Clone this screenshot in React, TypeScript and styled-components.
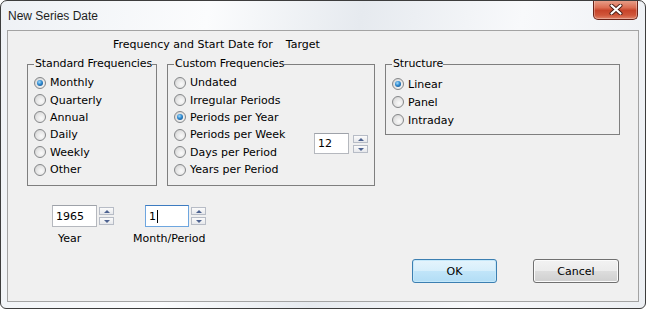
import React from 'react';
import styled, { createGlobalStyle } from 'styled-components';

const GlobalStyle = createGlobalStyle`
  html, body {
    margin: 0;
    padding: 0;
    background: #ffffff;
  }
  body {
    font-family: "DejaVu Sans", Verdana, sans-serif;
    font-size: 11px;
    color: #000000;
  }
`;

const Window = styled.div`
  box-sizing: border-box;
  width: 646px;
  height: 309px;
  border: 1px solid #3d3d3d;
  border-radius: 7px 7px 6px 6px;
  background: linear-gradient(100deg, #eef1f5 0%, #fbfcfd 30%, #e6eaef 52%, #f8f9fb 75%, #eceff3 100%);
  display: flex;
  flex-direction: column;
  overflow: hidden;
`;

const TitleBar = styled.div`
  height: 29px;
  display: flex;
  align-items: center;
  padding-left: 7px;
`;

const Title = styled.span`
  font-family: "Liberation Sans", Arial, sans-serif;
  font-size: 12px;
  color: #1e1e1e;
`;

const CloseButton = styled.div`
  align-self: flex-start;
  margin: -1px 7px 0 auto;
  width: 45px;
  height: 20px;
  box-sizing: border-box;
  border: 1px solid #6a2318;
  border-top: none;
  border-radius: 0 0 5px 5px;
  background: linear-gradient(#e9a48f 0%, #dc6e53 40%, #c7442a 55%, #d0563a 80%, #e0846a 100%);
  box-shadow: inset 0 0 0 1px rgba(255, 255, 255, 0.3);
  display: flex;
  align-items: center;
  justify-content: center;
`;

const Client = styled.div`
  box-sizing: border-box;
  margin: 0 6px 0 6px;
  height: 272px;
  border: 1px solid #a3a3a3;
  background: #f0f0f0;
  display: flex;
  flex-direction: column;
`;

const Heading = styled.div`
  display: flex;
  gap: 13px;
  margin: 7px 0 0 105px;
  line-height: 14px;
`;

const GroupRow = styled.div`
  display: flex;
  align-items: flex-start;
  gap: 10px;
  margin: 5px 0 0 19px;
`;

const GroupBox = styled.fieldset<{ $width: number; $height: number; $padTop: number }>`
  box-sizing: border-box;
  flex: none;
  width: ${(p) => p.$width}px;
  min-width: 0;
  min-inline-size: 0;
  height: ${(p) => p.$height}px;
  margin: 0;
  padding: ${(p) => p.$padTop}px 6px 0 6px;
  border: 1px solid #7f7f7f;
  display: flex;
  align-items: flex-start;
`;

const Legend = styled.legend`
  padding: 0 0 0 1px;
  line-height: 14px;
  letter-spacing: -0.12px;
  white-space: nowrap;
`;

const RadioList = styled.div`
  display: flex;
  flex-direction: column;
`;

const RadioRow = styled.label<{ $height: number }>`
  display: flex;
  align-items: center;
  gap: 4px;
  height: ${(p) => p.$height}px;
  white-space: nowrap;
`;

const RadioDot = styled.span<{ $checked?: boolean }>`
  box-sizing: border-box;
  width: 12px;
  height: 12px;
  border-radius: 50%;
  border: 1px solid #858789;
  background: radial-gradient(circle at 62% 62%, #fafafa 0%, #e4e4e4 55%, #c6c6c6 100%);
  display: flex;
  align-items: center;
  justify-content: center;
  flex-shrink: 0;

  &::after {
    content: '';
    display: ${(p) => (p.$checked ? 'block' : 'none')};
    width: 6px;
    height: 6px;
    border-radius: 50%;
    background: radial-gradient(circle at 40% 35%, #a6dcfb 0%, #2f8ad0 45%, #0c3e74 100%);
  }
`;

const Spinner = styled.div<{ $gap: number }>`
  display: flex;
  align-items: flex-start;
  gap: ${(p) => p.$gap}px;
`;

const CustomSpinner = styled(Spinner)`
  margin: 59px 0 0 auto;
`;

const NumberBox = styled.div<{ $width: number; $height: number; $focused?: boolean }>`
  box-sizing: border-box;
  width: ${(p) => p.$width}px;
  height: ${(p) => p.$height}px;
  border: 1px solid ${(p) => (p.$focused ? '#6ea6df' : '#b5b8be')};
  border-top-color: ${(p) => (p.$focused ? '#3d7bc0' : '#9ea2a9')};
  background: #ffffff;
  padding-left: 3px;
  display: flex;
  align-items: center;
`;

const Caret = styled.span`
  display: inline-block;
  width: 1px;
  height: 13px;
  margin-left: 1px;
  background: #000000;
`;

const SpinButtons = styled.div`
  display: flex;
  flex-direction: column;
  gap: 2px;
  margin-top: 2px;
`;

const SpinButton = styled.div<{ $down?: boolean }>`
  box-sizing: border-box;
  width: 15px;
  height: 8px;
  border: 1px solid #b7bcc6;
  background: linear-gradient(#fbfbfb, #e6e8ec);
  display: flex;
  align-items: center;
  justify-content: center;

  &::after {
    content: '';
    width: 0;
    height: 0;
    border-left: 3px solid transparent;
    border-right: 3px solid transparent;
    ${(p) => (p.$down ? 'border-top: 3px solid #4d6290;' : 'border-bottom: 3px solid #4d6290;')}
  }
`;

const BottomRow = styled.div`
  display: flex;
  gap: 31px;
  margin: 19px 0 0 44px;
`;

const Field = styled.div`
  display: flex;
  flex-direction: column;
`;

const FieldLabel = styled.span<{ $offset: number }>`
  margin: 5px 0 0 ${(p) => p.$offset}px;
  line-height: 14px;
  white-space: nowrap;
`;

const ButtonRow = styled.div`
  display: flex;
  justify-content: flex-end;
  gap: 36px;
  margin-top: 13px;
  padding-right: 19px;
`;

const DialogButton = styled.button<{ $width: number; $default?: boolean }>`
  box-sizing: border-box;
  width: ${(p) => p.$width}px;
  height: 24px;
  padding: 0;
  font-family: "DejaVu Sans", Verdana, sans-serif;
  font-size: 11px;
  color: #000000;
  border-radius: 3px;
  border: 1px solid ${(p) => (p.$default ? '#3c7fb1' : '#707070')};
  background: ${(p) =>
    p.$default
      ? 'linear-gradient(#e5f4fc 0%, #d6eefb 50%, #c1e5f9 50%, #b2ddf5 100%)'
      : 'linear-gradient(#f2f2f2 0%, #ebebeb 50%, #dddddd 50%, #cfcfcf 100%)'};
  box-shadow: inset 0 0 0 1px ${(p) => (p.$default ? '#c5e8fa' : '#fbfbfb')};
`;

type Option = { label: string; checked?: boolean };

const standard: Option[] = [
  { label: 'Monthly', checked: true },
  { label: 'Quarterly' },
  { label: 'Annual' },
  { label: 'Daily' },
  { label: 'Weekly' },
  { label: 'Other' },
];

const custom: Option[] = [
  { label: 'Undated' },
  { label: 'Irregular Periods' },
  { label: 'Periods per Year', checked: true },
  { label: 'Periods per Week' },
  { label: 'Days per Period' },
  { label: 'Years per Period' },
];

const structure: Option[] = [
  { label: 'Linear', checked: true },
  { label: 'Panel' },
  { label: 'Intraday' },
];

const Radios = ({ items, rowHeight }: { items: Option[]; rowHeight: number }) => (
  <RadioList>
    {items.map((o) => (
      <RadioRow key={o.label} $height={rowHeight}>
        <RadioDot $checked={o.checked} />
        {o.label}
      </RadioRow>
    ))}
  </RadioList>
);

const Spin = () => (
  <SpinButtons>
    <SpinButton />
    <SpinButton $down />
  </SpinButtons>
);

const App = () => {
  return (
    <>
      <GlobalStyle />
      <Window>
        <TitleBar>
          <Title>New Series Date</Title>
          <CloseButton>
            <svg width="14" height="11" viewBox="0 0 14 11">
              <path d="M2.5 1.5 L11.5 9.5 M11.5 1.5 L2.5 9.5" stroke="#4a1c14" strokeWidth="4" strokeLinecap="round" />
              <path d="M2.5 1.5 L11.5 9.5 M11.5 1.5 L2.5 9.5" stroke="#ffffff" strokeWidth="2.2" strokeLinecap="round" />
            </svg>
          </CloseButton>
        </TitleBar>
        <Client>
          <Heading>
            <span>Frequency and Start Date for</span>
            <span>Target</span>
          </Heading>
          <GroupRow>
            <GroupBox $width={130} $height={129} $padTop={3}>
              <Legend>Standard Frequencies</Legend>
              <Radios items={standard} rowHeight={17.4} />
            </GroupBox>
            <GroupBox $width={208} $height={129} $padTop={3}>
              <Legend>Custom Frequencies</Legend>
              <Radios items={custom} rowHeight={17.4} />
              <CustomSpinner $gap={4}>
                <NumberBox $width={35} $height={21}>12</NumberBox>
                <Spin />
              </CustomSpinner>
            </GroupBox>
            <GroupBox $width={235} $height={78} $padTop={4}>
              <Legend>Structure</Legend>
              <Radios items={structure} rowHeight={18} />
            </GroupBox>
          </GroupRow>
          <BottomRow>
            <Field>
              <Spinner $gap={2}>
                <NumberBox $width={45} $height={22}>1965</NumberBox>
                <Spin />
              </Spinner>
              <FieldLabel $offset={6}>Year</FieldLabel>
            </Field>
            <Field>
              <Spinner $gap={2}>
                <NumberBox $width={44} $height={22} $focused>
                  1<Caret />
                </NumberBox>
                <Spin />
              </Spinner>
              <FieldLabel $offset={-12}>Month/Period</FieldLabel>
            </Field>
          </BottomRow>
          <ButtonRow>
            <DialogButton $width={85} $default>OK</DialogButton>
            <DialogButton $width={86}>Cancel</DialogButton>
          </ButtonRow>
        </Client>
      </Window>
    </>
  );
};

export default App;
